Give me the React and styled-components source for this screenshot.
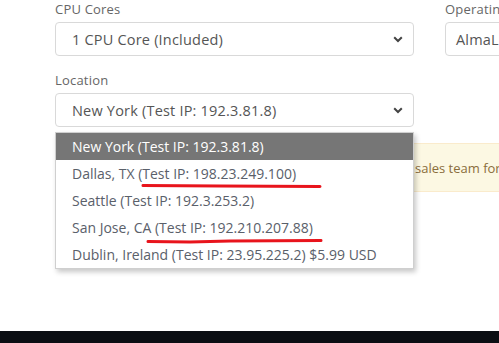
import React from "react";
import styled, { createGlobalStyle } from "styled-components";

const Global = createGlobalStyle`
  html, body { margin: 0; padding: 0; background: #fff; }
  body { font-family: "Open Sans", "Liberation Sans", sans-serif; overflow: hidden; }
  * { box-sizing: border-box; }
`;

const Page = styled.div`
  display: flex;
  flex-direction: column;
  height: 343px;
  width: 499px;
  overflow: hidden;
`;

const Main = styled.main`
  flex: 1;
  padding: 2px 0 0 55px;
  display: flex;
  flex-direction: column;
  position: relative;
`;

const Row = styled.div`
  display: grid;
  grid-template-columns: 359px 300px;
  column-gap: 31px;
  margin-bottom: ${(p) => p.$mb || 0}px;
`;

const Field = styled.div`
  display: flex;
  flex-direction: column;
  position: relative;
`;

const Label = styled.label`
  font-family: "Open Sans", sans-serif;
  font-size: 13px;
  line-height: 15px;
  color: #666;
  letter-spacing: 0.2px;
  margin-bottom: 5px;
  white-space: nowrap;
`;

const Select = styled.div`
  height: 34px;
  border: 1px solid #d9d9d9;
  border-radius: 4px;
  background: #fff;
  display: flex;
  align-items: center;
  justify-content: space-between;
  padding: 0 10px 0 ${(p) => p.$pl || 16}px;
  font-size: 14.5px;
  letter-spacing: 0.2px;
  color: #555;
  white-space: nowrap;
  overflow: hidden;
`;

const Chevron = () => (
  <svg width="10" height="7" viewBox="0 0 10 7">
    <path d="M1.2 1.2 L5 5 L8.8 1.2" fill="none" stroke="#444" strokeWidth="2" />
  </svg>
);

const Alert = styled.div`
  margin-top: 16px;
  width: 460px;
  height: 49px;
  background: #fcf8e3;
  border: 1px solid #faebcc;
  border-radius: 4px;
  color: #8a6d3b;
  font-size: 13px;
  display: flex;
  align-items: center;
  padding: 0 0 0 28px;
  white-space: nowrap;
  overflow: hidden;
`;

const Menu = styled.ul`
  position: absolute;
  top: calc(100% + 5px);
  left: 0;
  width: 359px;
  margin: 0;
  padding: 0;
  list-style: none;
  background: #fff;
  border: 1px solid #cfcfcf;
  box-shadow: 2px 3px 5px rgba(0, 0, 0, 0.22);
  z-index: 5;
`;

const Option = styled.li`
  height: 27px;
  display: flex;
  align-items: center;
  padding-left: 16px;
  font-size: 14px;
  color: ${(p) => (p.$active ? "#fff" : "#5a606a")};
  background: ${(p) => (p.$active ? "#767676" : "#fff")};
  white-space: nowrap;
`;

const Marks = styled.svg`
  position: absolute;
  left: 0;
  top: 0;
  pointer-events: none;
  z-index: 6;
`;

const Footer = styled.footer`
  height: 12px;
  background: #0b0e13;
`;

const options = [
  "New York (Test IP: 192.3.81.8)",
  "Dallas, TX (Test IP: 198.23.249.100)",
  "Seattle (Test IP: 192.3.253.2)",
  "San Jose, CA (Test IP: 192.210.207.88)",
  "Dublin, Ireland (Test IP: 23.95.225.2) $5.99 USD",
];

export default function App() {
  return (
    <Page>
      <Global />
      <Main>
        <Row $mb={17}>
          <Field>
            <Label>CPU Cores</Label>
            <Select>
              1 CPU Core (Included)
              <Chevron />
            </Select>
          </Field>
          <Field>
            <Label>Operating System</Label>
            <Select $pl={10}>AlmaLinux 9</Select>
          </Field>
        </Row>
        <Row>
          <Field>
            <Label>Location</Label>
            <Select>
              New York (Test IP: 192.3.81.8)
              <Chevron />
            </Select>
            <Menu>
              {options.map((o, i) => (
                <Option key={o} $active={i === 0}>
                  {o}
                </Option>
              ))}
            </Menu>
          </Field>
        </Row>
        <Alert>
          Custom locations may be available. Please contact our sales team for more details.
        </Alert>
        <Marks width="499" height="300" viewBox="0 0 499 300">
          <path d="M143 185.5 L220 186 L320 186.5" stroke="#e8141c" strokeWidth="3" fill="none" strokeLinecap="round" />
          <path d="M148 241.5 L190 242 L230 241 L321 240.5" stroke="#e8141c" strokeWidth="3" fill="none" strokeLinecap="round" />
        </Marks>
      </Main>
      <Footer />
    </Page>
  );
}
